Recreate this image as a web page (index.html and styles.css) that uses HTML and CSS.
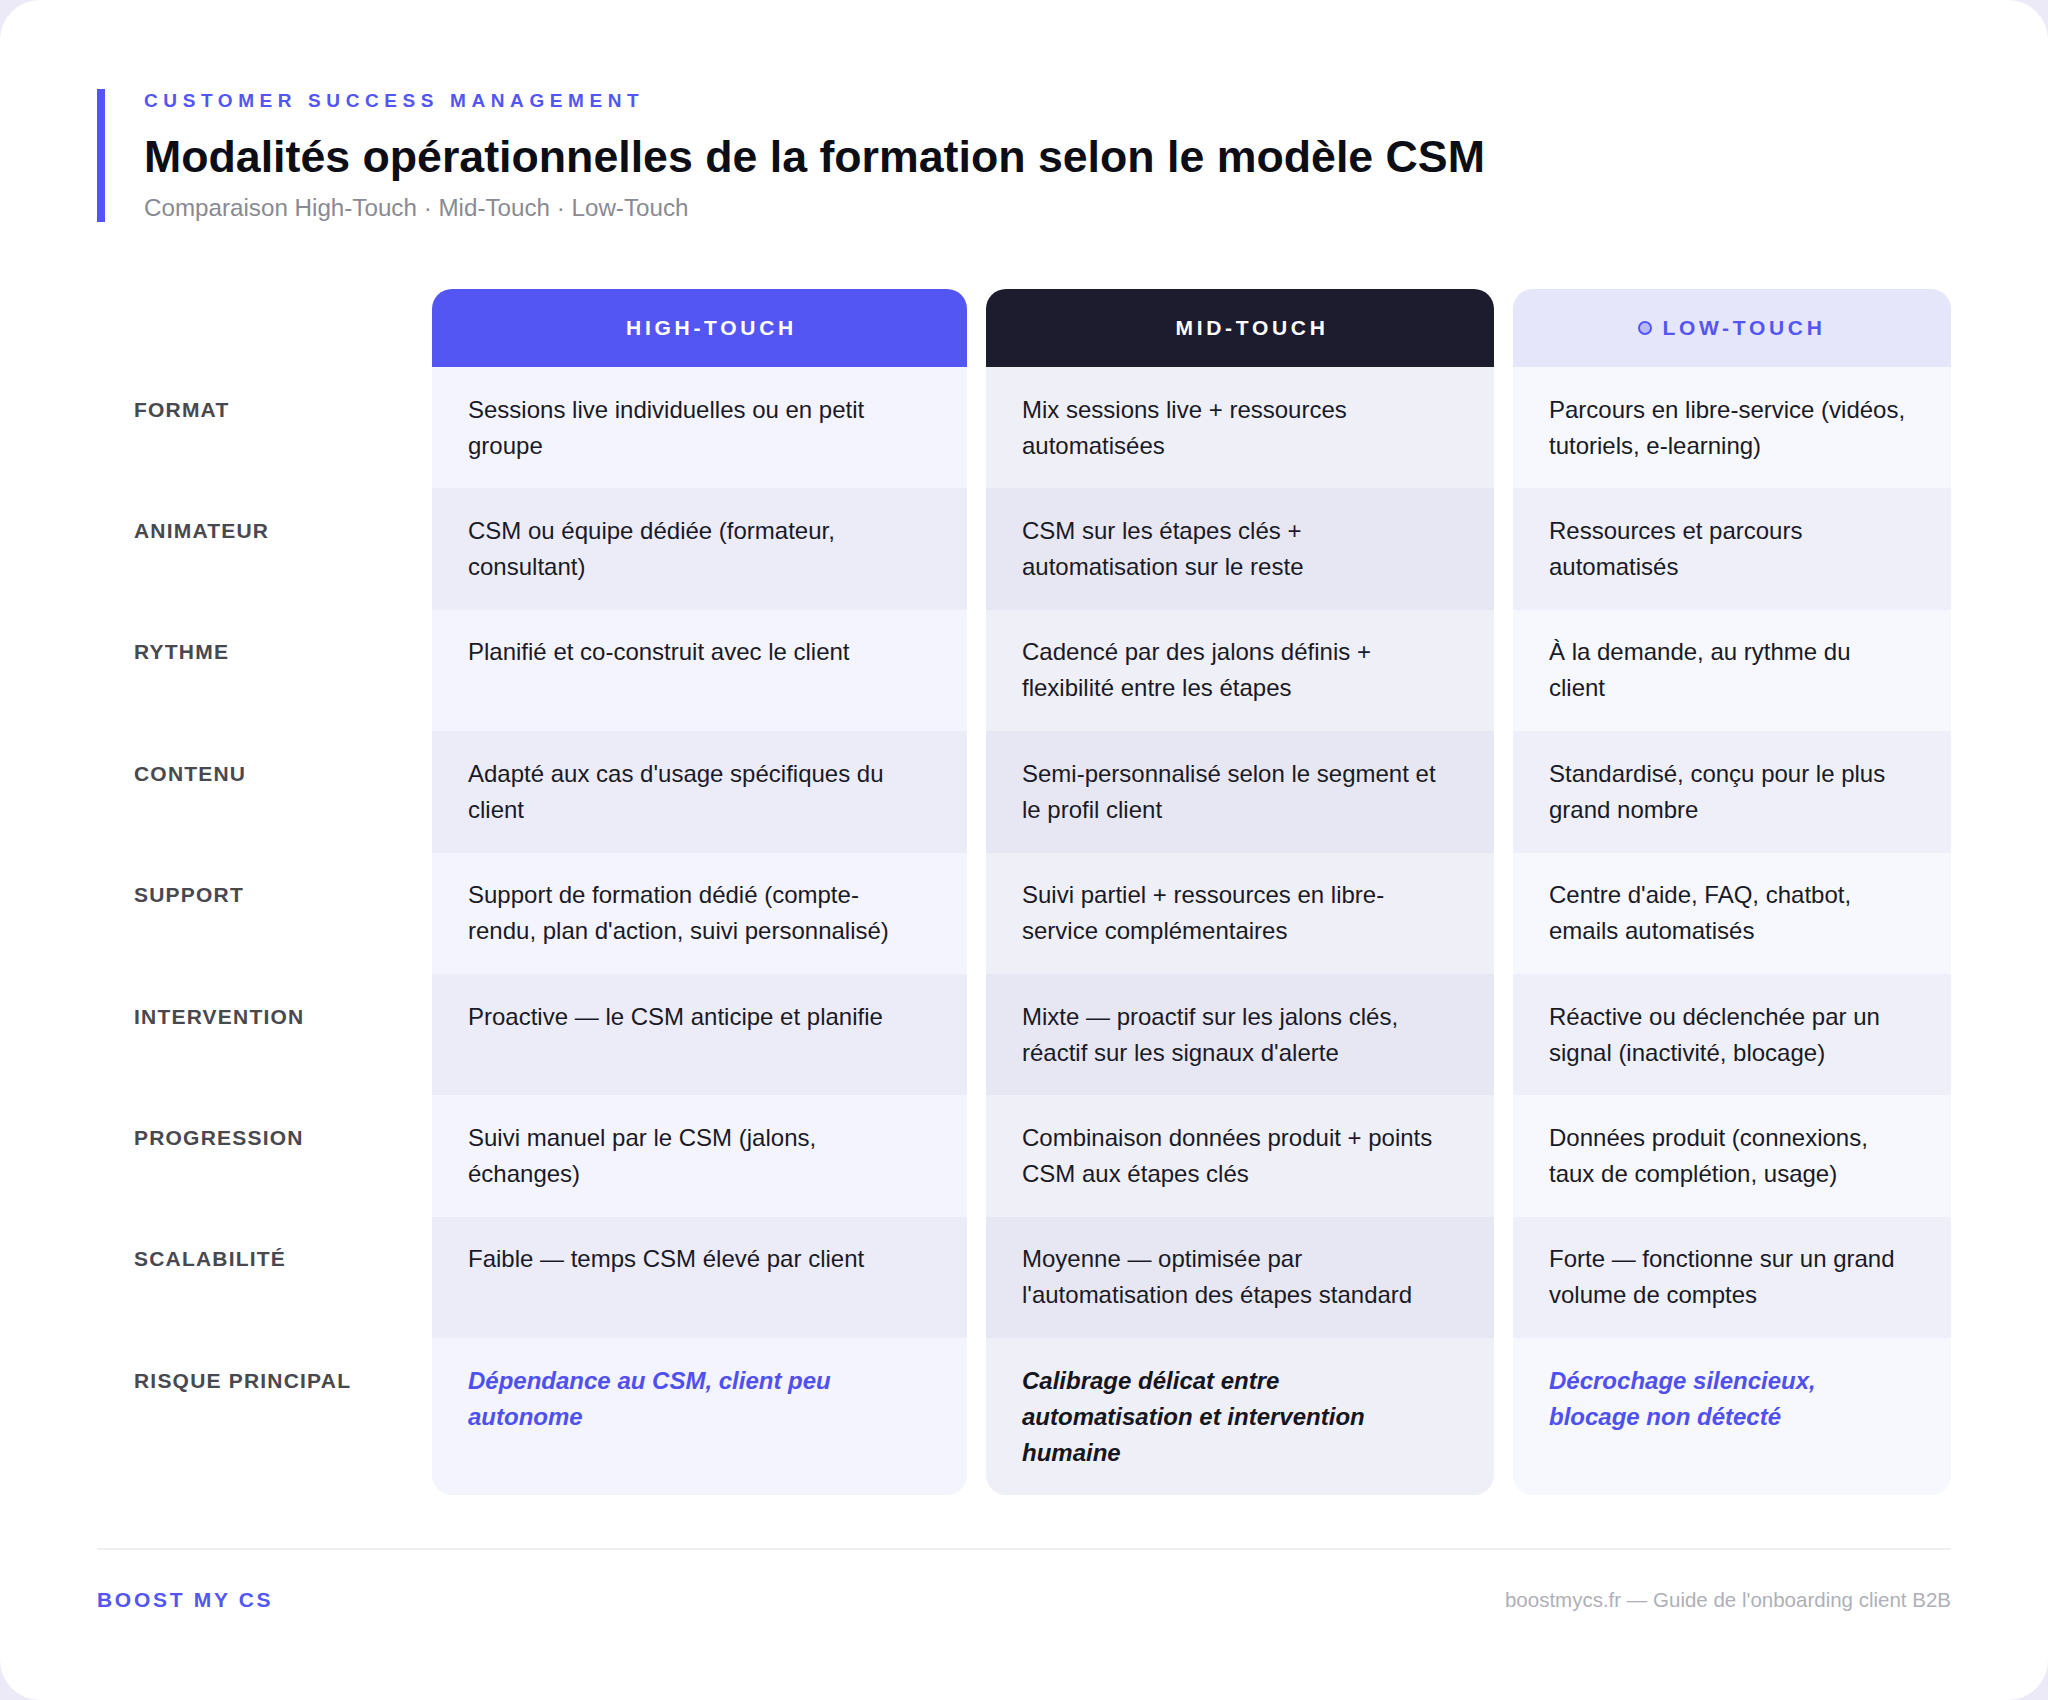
FILE: index.html
```html
<!DOCTYPE html>
<html lang="fr">
<head>
<meta charset="utf-8">
<title>Modalités opérationnelles de la formation</title>
<link rel="stylesheet" href="styles.css">
</head>
<body>
<div class="card">
  <header class="intro">
    <div class="eyebrow">CUSTOMER SUCCESS MANAGEMENT</div>
    <h1 class="title">Modalités opérationnelles de la formation selon le modèle CSM</h1>
    <div class="subtitle">Comparaison High-Touch · Mid-Touch · Low-Touch</div>
  </header>

  <div class="grid">
    <div class="corner"></div>
    <div class="head head-high"><span class="dot dot-hidden"></span>HIGH-TOUCH</div>
    <div class="head head-mid"><span class="dot dot-hidden"></span>MID-TOUCH</div>
    <div class="head head-low"><span class="dot"></span>LOW-TOUCH</div>

    <div class="label">FORMAT</div>
    <div class="cell high odd">Sessions live individuelles ou en petit groupe</div>
    <div class="cell mid odd">Mix sessions live + ressources automatisées</div>
    <div class="cell low odd">Parcours en libre-service (vidéos, tutoriels, e-learning)</div>

    <div class="label">ANIMATEUR</div>
    <div class="cell high even">CSM ou équipe dédiée (formateur, consultant)</div>
    <div class="cell mid even">CSM sur les étapes clés + automatisation sur le reste</div>
    <div class="cell low even">Ressources et parcours automatisés</div>

    <div class="label">RYTHME</div>
    <div class="cell high odd">Planifié et co-construit avec le client</div>
    <div class="cell mid odd">Cadencé par des jalons définis + flexibilité entre les étapes</div>
    <div class="cell low odd">À la demande, au rythme du client</div>

    <div class="label">CONTENU</div>
    <div class="cell high even">Adapté aux cas d'usage spécifiques du client</div>
    <div class="cell mid even">Semi-personnalisé selon le segment et le profil client</div>
    <div class="cell low even">Standardisé, conçu pour le plus grand nombre</div>

    <div class="label">SUPPORT</div>
    <div class="cell high odd">Support de formation dédié (compte-rendu, plan d'action, suivi personnalisé)</div>
    <div class="cell mid odd">Suivi partiel + ressources en libre-service complémentaires</div>
    <div class="cell low odd">Centre d'aide, FAQ, chatbot, emails automatisés</div>

    <div class="label">INTERVENTION</div>
    <div class="cell high even">Proactive — le CSM anticipe et planifie</div>
    <div class="cell mid even">Mixte — proactif sur les jalons clés, réactif sur les signaux d'alerte</div>
    <div class="cell low even">Réactive ou déclenchée par un signal (inactivité, blocage)</div>

    <div class="label">PROGRESSION</div>
    <div class="cell high odd">Suivi manuel par le CSM (jalons, échanges)</div>
    <div class="cell mid odd">Combinaison données produit + points CSM aux étapes clés</div>
    <div class="cell low odd">Données produit (connexions, taux de complétion, usage)</div>

    <div class="label">SCALABILITÉ</div>
    <div class="cell high even">Faible — temps CSM élevé par client</div>
    <div class="cell mid even">Moyenne — optimisée par l'automatisation des étapes standard</div>
    <div class="cell low even">Forte — fonctionne sur un grand volume de comptes</div>

    <div class="label">RISQUE PRINCIPAL</div>
    <div class="cell high odd last risk risk-accent">Dépendance au CSM, client peu autonome</div>
    <div class="cell mid odd last risk risk-dark">Calibrage délicat entre automatisation et intervention humaine</div>
    <div class="cell low odd last risk risk-accent">Décrochage silencieux, blocage non détecté</div>
  </div>

  <footer class="footer">
    <div class="brand">BOOST MY CS</div>
    <div class="source">boostmycs.fr — Guide de l'onboarding client B2B</div>
  </footer>
</div>
</body>
</html>
```

FILE: styles.css
```css
* { box-sizing: border-box; }

html, body {
  margin: 0;
  padding: 0;
}

body {
  background: #ebeaf6;
  font-family: "Liberation Sans", Arial, sans-serif;
  color: #1c1c28;
}

.card {
  width: 2048px;
  height: 1700px;
  background: #ffffff;
  border-radius: 40px;
  padding: 89px 97px 0 97px;
}

.intro {
  border-left: 8px solid #5456f3;
  padding-left: 39px;
}

.eyebrow {
  font-size: 19px;
  line-height: 23px;
  font-weight: 700;
  letter-spacing: 5.6px;
  color: #5456f3;
}

.title {
  margin: 18px 0 0 0;
  font-size: 44.7px;
  line-height: 53px;
  font-weight: 700;
  color: #0d0d16;
  letter-spacing: 0;
}

.subtitle {
  margin-top: 11px;
  font-size: 24.2px;
  line-height: 28px;
  color: #8a8a92;
}

.grid {
  margin-top: 67px;
  display: grid;
  grid-template-columns: 316px 535px 508px 438px;
  grid-template-rows: 78px;
  column-gap: 19px;
  row-gap: 0;
}

.head {
  display: flex;
  align-items: center;
  justify-content: center;
  border-radius: 20px 20px 0 0;
  font-size: 21px;
  font-weight: 700;
  letter-spacing: 3.7px;
}

.head-high { background: #5456f3; color: #ffffff; }
.head-mid { background: #1c1c2e; color: #ffffff; }
.head-low { background: #e6e6fa; color: #5456f3; }

.dot {
  width: 14px;
  height: 14px;
  border-radius: 50%;
  border: 2.5px solid #5456f3;
  background: #b9b9f6;
  margin-right: 10px;
}

.dot-hidden { visibility: hidden; }

.label {
  padding: 24.7px 0 24.7px 37px;
  font-size: 21px;
  line-height: 36px;
  font-weight: 700;
  letter-spacing: 1.2px;
  color: #48484f;
}

.cell {
  padding: 24.7px 42px 24.7px 36px;
  font-size: 24px;
  line-height: 36px;
  color: #1a1a26;
}

.high.odd { background: #f4f4fe; }
.high.even { background: #ececf9; }
.mid.odd { background: #efeff8; }
.mid.even { background: #e7e7f3; }
.low.odd { background: #f7f7fe; }
.low.even { background: #efeff9; }

.last { border-radius: 0 0 20px 20px; }

.risk {
  font-style: italic;
  font-weight: 700;
}

.risk-accent { color: #5050ee; }
.risk-dark { color: #16161f; }

.footer {
  margin-top: 53px;
  border-top: 2px solid #efeff3;
  padding-top: 38px;
  display: flex;
  justify-content: space-between;
  align-items: center;
}

.brand {
  font-size: 21px;
  font-weight: 700;
  letter-spacing: 2.7px;
  color: #5456f3;
}

.source {
  font-size: 20.5px;
  color: #b0b0b8;
}
```
